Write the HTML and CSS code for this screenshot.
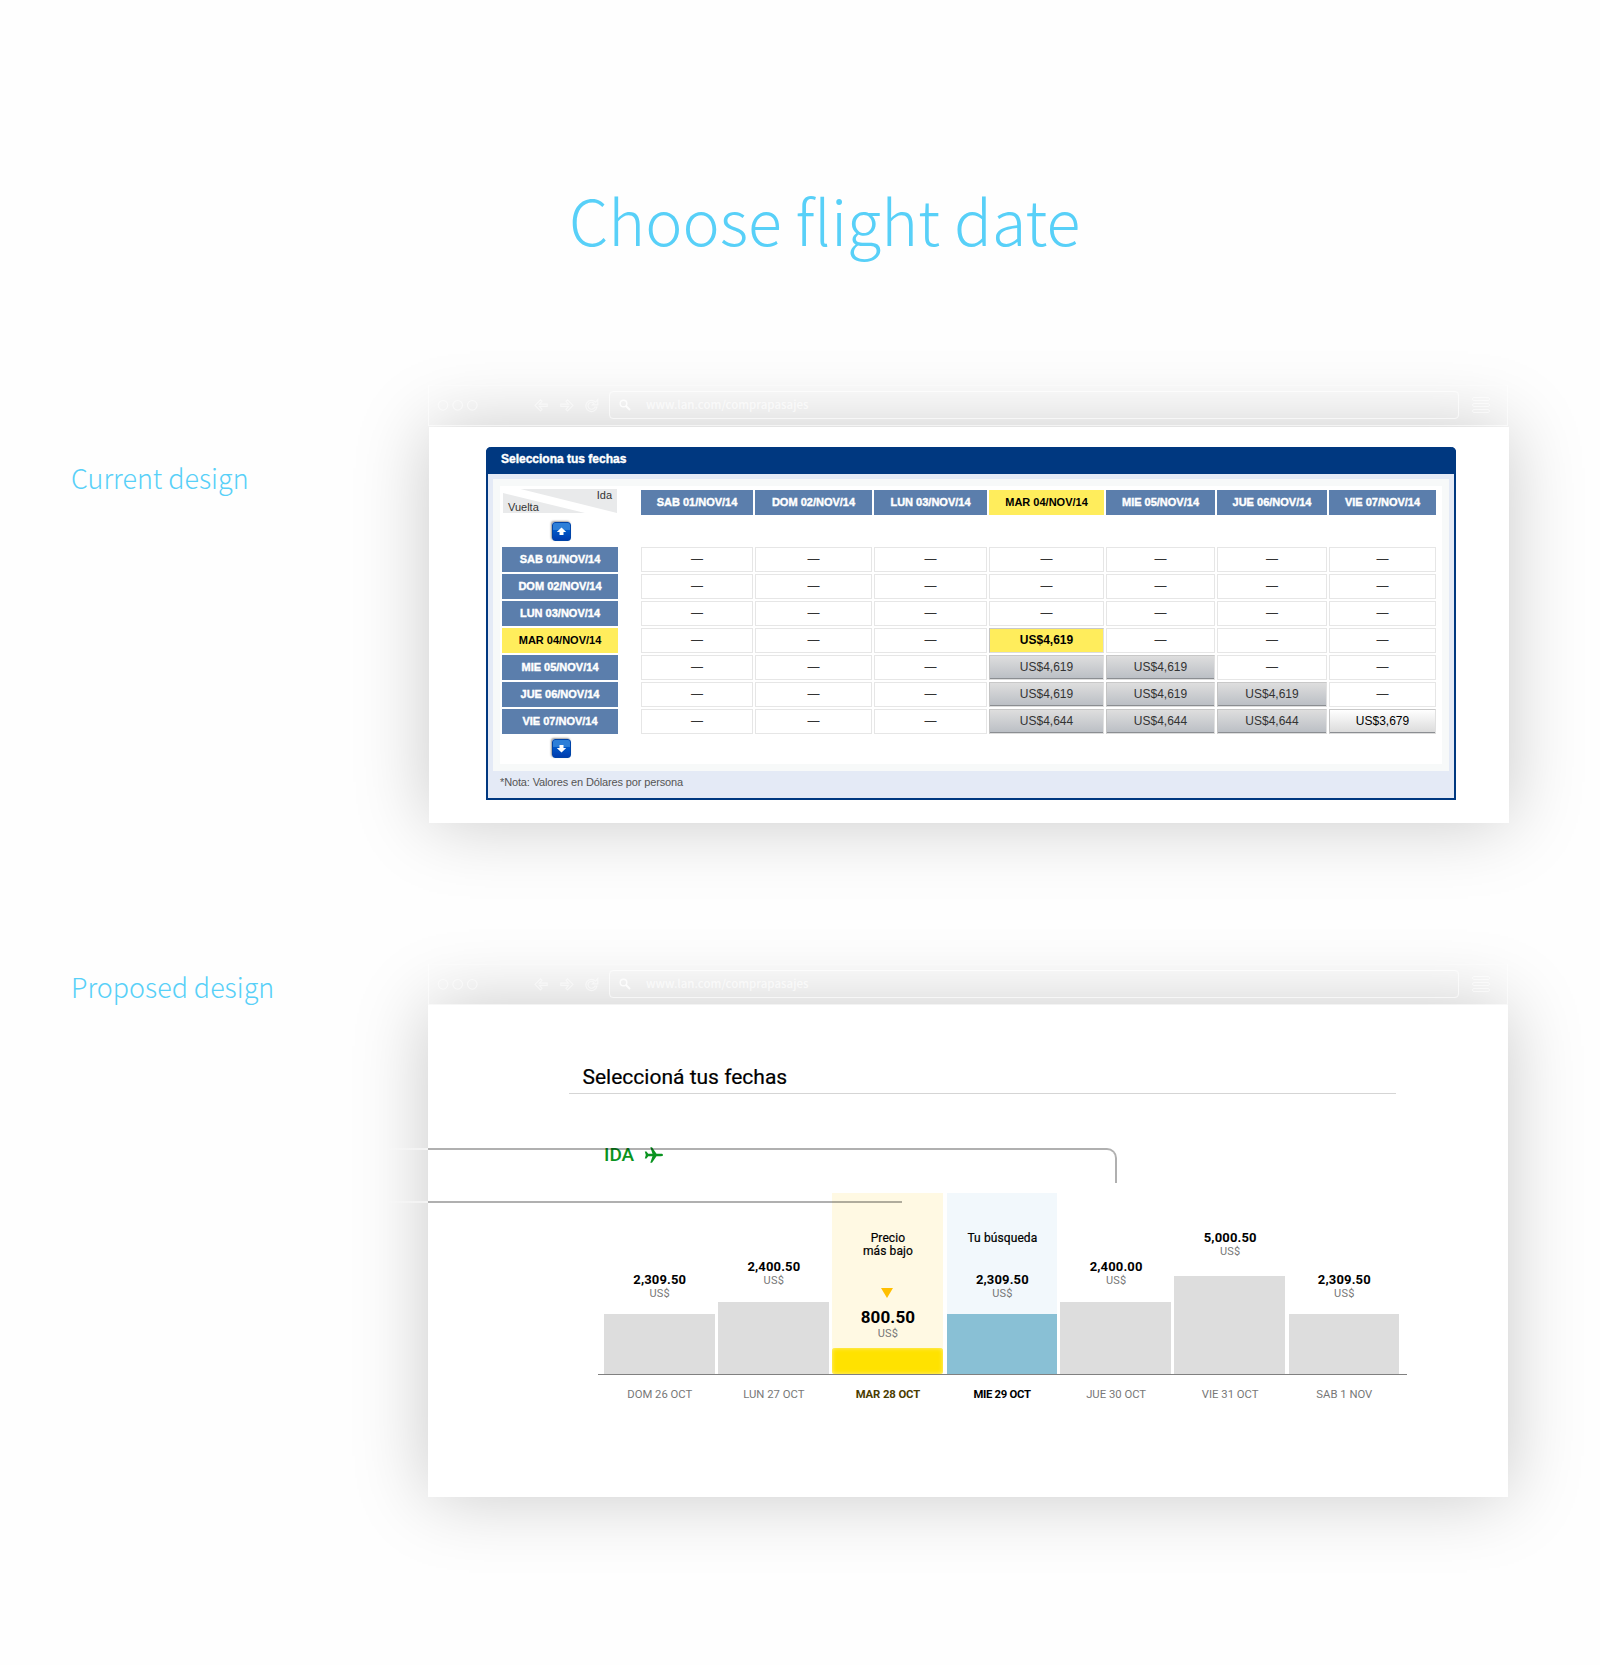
FILE: index.html
```
<!DOCTYPE html>
<html lang="es">
<head>
<meta charset="utf-8">
<title>Choose flight date</title>
<link rel="stylesheet" href="styles.css">
</head>
<body>
<svg class="defs" width="0" height="0">
  <defs>
    <g id="nav-icons" fill="none" stroke="#fff" stroke-opacity=".5" stroke-width="1.2">
      <circle cx="13" cy="19.300" r="4.800"/><circle cx="27.700" cy="19.300" r="4.800"/><circle cx="42.300" cy="19.300" r="4.800"/>
      <path d="M105 19.300l5.500-5.500 1.500 1.500-2.600 2.900h7.800v2.200h-7.800l2.600 2.900-1.500 1.500z"/>
      <path d="M143 19.300l-5.500-5.500-1.500 1.500 2.600 2.900h-7.800v2.200h7.800l-2.600 2.900 1.500 1.500z"/>
      <path d="M165.600 16.200a5.600 5.600 0 1 0 1.300 5h-2.200a3.500 3.500 0 1 1-.7-3.900l-1.600 1.600h5.400v-5.400z"/>
    </g>
    <g id="search-icon" fill="none" stroke="#fff" stroke-opacity=".8">
      <circle cx="4.500" cy="4.500" r="3.300" stroke-width="1.500"/><path d="M7 7l4 4" stroke-width="2"/>
    </g>
    <g id="menu-icon" fill="none" stroke="#fff" stroke-opacity=".55">
      <rect x=".5" y=".5" width="17" height="3" rx="1.500"/><rect x=".5" y="6.500" width="17" height="3" rx="1.500"/><rect x=".5" y="12.500" width="17" height="3" rx="1.500"/>
    </g>
  </defs>
</svg>

<h1 class="title">Choose flight date</h1>

<section class="row row-current">
  <h2 class="label">Current design</h2>
  <div class="window">
    <div class="toolbar">
      <svg class="nav" width="179" height="38"><use href="#nav-icons"/></svg>
      <div class="url"><svg width="12" height="12"><use href="#search-icon"/></svg><span>www.lan.com/comprapasajes</span></div>
      <svg class="menu" width="18" height="16"><use href="#menu-icon"/></svg>
    </div>
    <div class="content">
      <div class="panel">
        <div class="panel-title">Selecciona tus fechas</div>
        <div class="panel-body">
          <div class="fares">
            <div class="corner">
              <svg width="114" height="24"><path d="M17.500 0H114V24z M0 4V24H82z" fill="#e9eaeb"/></svg>
              <span class="ida">Ida</span><span class="vuelta">Vuelta</span>
            </div>
            <i></i><b>SAB 01/NOV/14</b><b>DOM 02/NOV/14</b><b>LUN 03/NOV/14</b><b class="on">MAR 04/NOV/14</b><b>MIE 05/NOV/14</b><b>JUE 06/NOV/14</b><b>VIE 07/NOV/14</b>
            <div class="arrow arrow-up"><svg width="19" height="19"><path d="M9.500 5.500l4.700 4.500h-2.700v3h-4v-3H4.800z" fill="#fff"/></svg></div>
            <b>SAB 01/NOV/14</b><i></i><span>—</span><span>—</span><span>—</span><span>—</span><span>—</span><span>—</span><span>—</span>
            <b>DOM 02/NOV/14</b><i></i><span>—</span><span>—</span><span>—</span><span>—</span><span>—</span><span>—</span><span>—</span>
            <b>LUN 03/NOV/14</b><i></i><span>—</span><span>—</span><span>—</span><span>—</span><span>—</span><span>—</span><span>—</span>
            <b class="on">MAR 04/NOV/14</b><i></i><span>—</span><span>—</span><span>—</span><span class="fare chosen">US$4,619</span><span>—</span><span>—</span><span>—</span>
            <b>MIE 05/NOV/14</b><i></i><span>—</span><span>—</span><span>—</span><span class="fare">US$4,619</span><span class="fare">US$4,619</span><span>—</span><span>—</span>
            <b>JUE 06/NOV/14</b><i></i><span>—</span><span>—</span><span>—</span><span class="fare">US$4,619</span><span class="fare">US$4,619</span><span class="fare">US$4,619</span><span>—</span>
            <b>VIE 07/NOV/14</b><i></i><span>—</span><span>—</span><span>—</span><span class="fare">US$4,644</span><span class="fare">US$4,644</span><span class="fare">US$4,644</span><span class="fare best">US$3,679</span>
            <div class="arrow arrow-down"><svg width="19" height="19"><path d="M9.500 13.500l4.700-4.500h-2.700V6h-4v3H4.800z" fill="#fff"/></svg></div>
          </div>
        </div>
        <div class="note">*Nota: Valores en Dólares por persona</div>
      </div>
    </div>
  </div>
</section>

<section class="row row-proposed">
  <h2 class="label">Proposed design</h2>
  <div class="window">
    <div class="toolbar">
      <svg class="nav" width="179" height="38"><use href="#nav-icons"/></svg>
      <div class="url"><svg width="12" height="12"><use href="#search-icon"/></svg><span>www.lan.com/comprapasajes</span></div>
      <svg class="menu" width="18" height="16"><use href="#menu-icon"/></svg>
    </div>
    <div class="content">
      <h3 class="dates-title">Seleccioná tus fechas</h3>
      <div class="direction">IDA
        <svg width="20" height="16" viewBox="0 0 20 16"><path d="M19 8c0-.8-.8-1.200-1.800-1.200h-4.700L8 .3H6.300l2.200 6.500H4.200L2.500 4.500H.8l1 3.500-1 3.500h1.700l1.700-2.300h4.300l-2.200 6.500H8l4.500-6.500h4.700c1 0 1.800-.4 1.800-1.200z" fill="#0a9420"/></svg>
      </div>
      <div class="chart">
        <div class="day"><strong>2,309.50</strong><small>US$</small><div class="bar" style="height:60px"></div></div>
        <div class="day mid"><strong>2,400.50</strong><small>US$</small><div class="bar" style="height:72px"></div></div>
        <div class="day cheapest"><p>Precio<br>más bajo</p><svg width="12" height="10"><path d="M0 0h12L6 10z" fill="#ffbf00"/></svg><strong>800.50</strong><small>US$</small><div class="bar" style="height:26px"></div></div>
        <div class="day search"><p>Tu búsqueda</p><strong>2,309.50</strong><small>US$</small><div class="bar" style="height:60px"></div></div>
        <div class="day mid"><strong>2,400.00</strong><small>US$</small><div class="bar" style="height:72px"></div></div>
        <div class="day peak"><strong>5,000.50</strong><small>US$</small><div class="bar" style="height:98px"></div></div>
        <div class="day"><strong>2,309.50</strong><small>US$</small><div class="bar" style="height:60px"></div></div>
      </div>
      <div class="days"><span>DOM 26 OCT</span><span>LUN 27 OCT</span><span class="mar">MAR 28 OCT</span><span class="mie">MIE 29 OCT</span><span>JUE 30 OCT</span><span>VIE 31 OCT</span><span>SAB 1 NOV</span></div>
      <div class="callout callout-day"></div>
      <div class="callout callout-price"></div>
    </div>
  </div>
</section>
</body>
</html>
```
FILE: styles.css
```
* { box-sizing: border-box; }
body { margin: 0; width: 1600px; height: 1665px; overflow: hidden; background: #fefefe; display: flex; flex-direction: column; }
.defs { position: absolute; }
svg { display: block; flex: none; }

.title { margin: 0; height: 385px; padding: 169px 0 0 569px; font: 200 62.700px/100px "Noto Sans CJK SC", sans-serif; color: #58d0f8; white-space: nowrap; }
.label { margin: 0; padding-left: 71px; font: 200 26.9px/40px "Noto Sans CJK SC", sans-serif; color: #58d0f8; white-space: nowrap; }
.row { display: grid; grid-template-columns: 428px 1081px; align-items: start; }
.row-current { height: 579px; }
.row-current .label { padding-top: 73px; }
.row-proposed .label { padding-top: 3px; }

.window { position: relative; }
.toolbar { position: relative; z-index: 1; width: 1080px; height: 41px; padding-left: 1px; display: flex; align-items: flex-start; border: 1px solid rgba(255,255,255,.6); border-top-color: rgba(255,255,255,.25); }
.url { width: 850px; height: 28px; margin-top: 5px; padding-left: 9px; display: flex; align-items: center; border: 1px solid rgba(255,255,255,.65); border-radius: 4px; font: 500 11.500px/26px "Noto Sans CJK SC", sans-serif; color: rgba(255,255,255,.65); }
.url span { margin: -2px 0 0 15px; }
.menu { margin: 11px 0 0 13px; }
.row-current .content { height: 396px; margin: 1px 0 0 1px; padding: 20px 0 0 57px; }
.content { width: 1080px; background: #fff; box-shadow: 0 0 70px rgba(0,0,0,.21); }

.panel { width: 970px; height: 353px; border: 2px solid #003880; border-top: 0; border-radius: 5px 5px 0 0; background: #e4eaf6; font-family: "Liberation Sans", Arial, sans-serif; }
.panel-title { height: 27px; margin: 0 -2px; padding-left: 15px; background: #003880; border-radius: 5px 5px 0 0; color: #fff; font-size: 12px; line-height: 24px; font-weight: bold; -webkit-text-stroke: .4px #fff; }
.panel-body { margin: 5px 5px 0; padding: 7px; background: #f7f9f9; }
.fares { height: 278px; padding: 4px 6px 0 2px; background: #fff; display: grid; grid-template-columns: 116px 19px 112px 117px 113px 115px 109px 110px 107px; grid-template-rows: 25px 28px repeat(7, 25px) 28px; gap: 2px; align-items: stretch; }
.fares b { background: #5b7eac; color: #fff; font-size: 11px; line-height: 25px; text-align: center; -webkit-text-stroke: .4px #fff; }
.fares b.on { background: #ffed5c; color: #000; -webkit-text-stroke: 0; }
.fares > span { border: 1px solid #e6e6e6; color: #333; font-size: 12px; line-height: 22px; text-align: center; }
.fares > .fare { border-color: #c8c8c8 #e0e0e0 #ddd #c4c4c4; background: linear-gradient(#dedede, #babec4); box-shadow: inset 0 -1px #8b8e92; }
.fares > .chosen { background: #ffed5c; box-shadow: none; color: #000; font-weight: bold; }
.fares > .best { background: linear-gradient(#fff, #dadada); color: #000; }
.corner { position: relative; margin-left: 1px; margin-top: -1px; font-size: 11px; line-height: 13px; color: #333; }
.ida { position: absolute; right: 6px; top: 0; }
.vuelta { position: absolute; left: 5px; bottom: 1px; }
.arrow { grid-column: 1 / -1; width: 19px; height: 19px; margin: 5px 0 0 50px; border-radius: 3px; background: linear-gradient(#2d7fd8 0 38%, #0058c8 42%, #003cae); border: 1px solid #0044a8; box-shadow: -1px -1px 2px rgba(0,0,0,.4); }
.arrow-down { margin-top: 3px; }
.arrow svg { margin: -1px; }
.note { padding: 4px 0 0 12px; font-size: 11px; line-height: 14px; letter-spacing: -.14px; color: #555; }

.row-proposed .toolbar { height: 41px; }
.row-proposed .content { height: 492px; padding: 55px 0 0 141px; font-family: Roboto, sans-serif; }
.dates-title { width: 827px; height: 34px; margin: 0; padding-left: 13.500px; border-bottom: 1px solid #d5d5d5; font-size: 21px; line-height: 35px; font-weight: 400; -webkit-text-stroke: .2px #000; }
.direction { height: 99px; padding: 50px 0 0 35px; display: flex; gap: 10px; font-size: 19px; line-height: 22px; font-weight: 500; color: #0a9420; }
.direction svg { margin-top: 3px; }
.chart { width: 809px; height: 182px; margin-left: 29px; padding: 0 6px; display: grid; grid-template-columns: repeat(7, 110.500px); gap: 3.600px; border-bottom: 1px solid #808080; }
.day { display: flex; flex-direction: column; align-items: center; justify-content: flex-end; }
.day p { margin: 0 0 auto; padding: 39px 0 0 1px; font-size: 12px; line-height: 13px; letter-spacing: .1px; text-align: center; -webkit-text-stroke: .2px #000; }
.day strong { padding-left: 1px; font-size: 13px; line-height: 15px; font-weight: 700; letter-spacing: .15px; }
.day small { margin-bottom: 14px; padding-left: 1px; font-size: 11px; line-height: 13px; letter-spacing: .2px; color: #777; font-weight: 400; }
.bar { width: 100%; background: #ddd; }
.mid small { margin-bottom: 15px; }
.cheapest { background: #fff9e3; }
.cheapest strong { margin-top: 10px; font-size: 17px; line-height: 19px; }
.cheapest small { margin-bottom: 8px; }
.cheapest .bar { background: #ffe200; box-shadow: inset 0 0 4px #fff08a; border-radius: 3px; }
.search { background: #f2f8fc; margin: 0 -.3px 0 .4px; }
.search .bar { background: #89c0d5; }
.peak small { margin-bottom: 18px; }
.days { display: grid; grid-template-columns: repeat(7, 110.500px); gap: 3.600px; margin: 13px 0 0 35.500px; text-align: center; font-size: 11.300px; line-height: 14px; color: #777; }
.days .mar { font-weight: 700; color: #4a3c00; letter-spacing: -.1px; }
.days .mie { font-weight: 700; color: #000; letter-spacing: -.3px; }

.callout { position: absolute; left: 0; border-top: 2px solid rgba(0,0,0,.31); }
.callout::before { content: ""; position: absolute; right: 100%; top: -2px; width: 44px; height: 2px; background: linear-gradient(to right, transparent, #fff); opacity: .6; }
.callout-day { top: 184px; width: 689px; height: 35px; border-right: 2px solid rgba(0,0,0,.31); border-top-right-radius: 10px; }
.callout-price { top: 237px; width: 474px; }
```
